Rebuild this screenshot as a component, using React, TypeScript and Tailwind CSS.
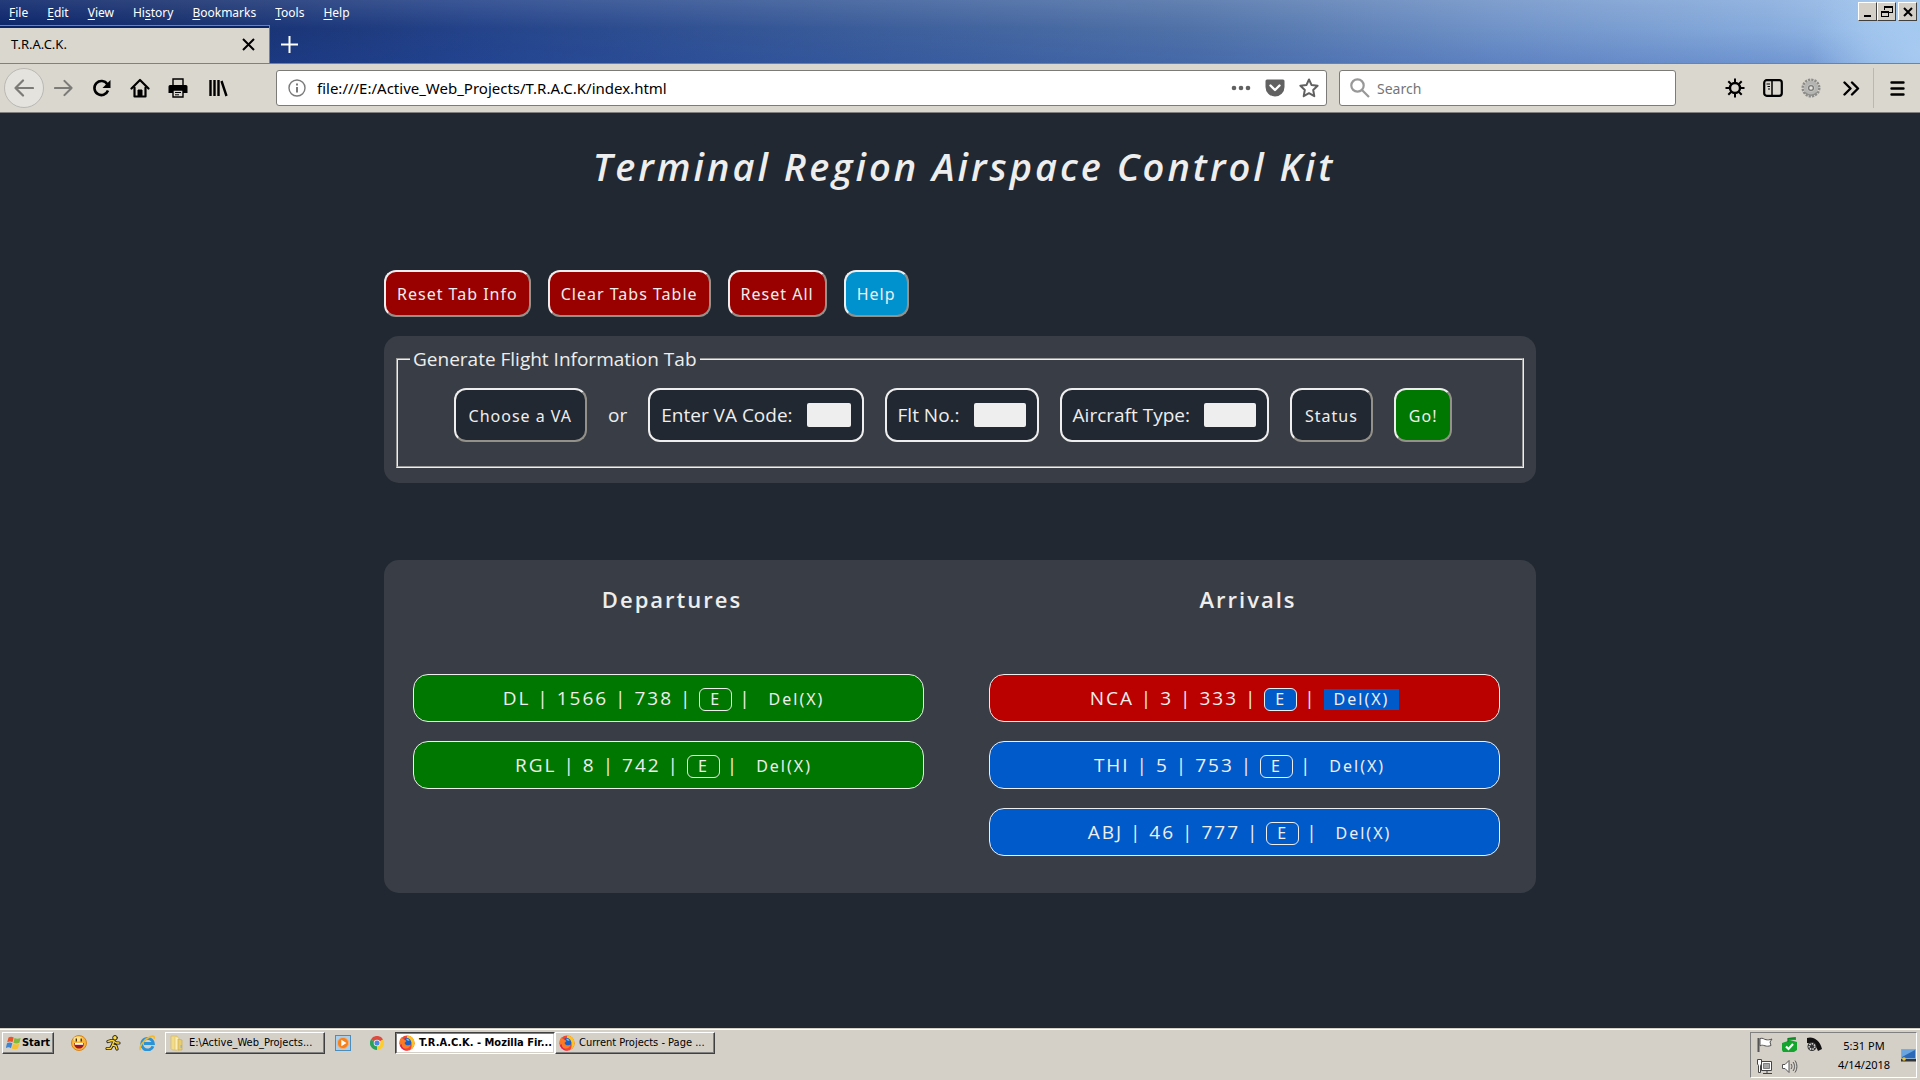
import type { ReactNode } from "react";

type Flight = { code: string; number: string; aircraft: string; tone: string; buttonTone: string };

const departures: Flight[] = [
  { code: "DL", number: "1566", aircraft: "738", tone: "bg-[#007700]", buttonTone: "bg-[#007700]" },
  { code: "RGL", number: "8", aircraft: "742", tone: "bg-[#007700]", buttonTone: "bg-[#007700]" },
];

const arrivals: Flight[] = [
  { code: "NCA", number: "3", aircraft: "333", tone: "bg-[#bb0000]", buttonTone: "bg-[#005aca]" },
  { code: "THI", number: "5", aircraft: "753", tone: "bg-[#005aca]", buttonTone: "bg-[#005aca]" },
  { code: "ABJ", number: "46", aircraft: "777", tone: "bg-[#005aca]", buttonTone: "bg-[#005aca]" },
];

const menus: [string, string, string][] = [
  ["", "F", "ile"],
  ["", "E", "dit"],
  ["", "V", "iew"],
  ["Hi", "s", "tory"],
  ["", "B", "ookmarks"],
  ["", "T", "ools"],
  ["", "H", "elp"],
];

function WindowButton({ label, children }: { label: string; children: ReactNode }) {
  return (
    <button
      aria-label={label}
      className="flex h-[19px] w-[19px] items-center justify-center border border-t-white border-r-[#404040] border-b-[#404040] border-l-white bg-[#d4d0c8]"
    >
      <svg width="14" height="14" viewBox="0 0 14 14" shapeRendering="crispEdges" fill="none" stroke="#000">
        {children}
      </svg>
    </button>
  );
}

function ToolButton({ label, className, children }: { label: string; className: string; children: ReactNode }) {
  return (
    <button aria-label={label} className={"flex h-[38px] items-center justify-center " + className}>
      {children}
    </button>
  );
}

function TitleBar() {
  return (
    <div className="bg-[radial-gradient(ellipse_110px_110px_at_100%_80%,#a6caf0_0%,#a6caf0aa_45%,#a6caf000_100%),linear-gradient(180deg,#ffffff1c_0%,#1e46a800_45%,#1e46a838_100%),linear-gradient(90deg,#0a246a_0%,#17306f_10%,#24438a_25%,#3b5d9a_45%,#5072a8_62%,#7093c8_78%,#86abdc_92%,#a0c5ee_100%)]">
      <div className="flex h-[25px] items-start justify-between">
        <nav className="flex gap-[19px] pl-[9px] font-['Noto_Sans',sans-serif] text-[12px] leading-[25px] text-white">
          {menus.map(([before, key, after]) => (
            <button key={key + after}>
              {before}
              <span className="underline underline-offset-2">{key}</span>
              {after}
            </button>
          ))}
        </nav>
        <div className="flex pt-[2px] pr-[3px]">
          <WindowButton label="Minimize">
            <path d="M3 11h7" strokeWidth="2" />
          </WindowButton>
          <WindowButton label="Restore">
            <path d="M4.500 5V1.500h8v6H9" />
            <path d="M4 2h9" strokeWidth="2" />
            <path d="M1.500 6.500h7v5h-7z" />
            <path d="M1 7h8" strokeWidth="2" />
          </WindowButton>
          <div className="ml-[2px]">
            <WindowButton label="Close">
              <path d="M3 3l8 8M11 3l-8 8" strokeWidth="2" shapeRendering="auto" />
            </WindowButton>
          </div>
        </div>
      </div>
      <div className="flex h-[38px] items-stretch">
        <div className="flex w-[270px] items-center justify-between border-t border-r border-[#808080] bg-[#dad7cf] pr-[14px] pl-[11px] shadow-[inset_0_2px_0_#0a246a]">
          <span className="font-['Noto_Sans',sans-serif] text-[13px] text-black">T.R.A.C.K.</span>
          <button aria-label="Close tab">
            <svg width="13" height="13" viewBox="0 0 13 13" stroke="#000" strokeWidth="2">
              <path d="M1 1l11 11M12 1L1 12" />
            </svg>
          </button>
        </div>
        <button aria-label="New tab" className="ml-[11px] flex items-center">
          <svg width="17" height="17" viewBox="0 0 17 17" stroke="#fff" strokeWidth="2">
            <path d="M8.500 0v17M0 8.500h17" />
          </svg>
        </button>
      </div>
    </div>
  );
}

function NavBar() {
  return (
    <div className="flex items-center border-b border-[#808080] bg-[#dad7cf] pt-[5px] pb-[4px] shadow-[inset_0_1px_0_#808080]">
      <div className="flex items-center">
        <button aria-label="Back" className="ml-1 flex h-10 w-10 items-center justify-center rounded-full border border-[#bab8b2] bg-[#e5e3de]">
          <svg width="20" height="18" viewBox="0 0 20 18" fill="none" stroke="#7c7b78" strokeWidth="2.200" strokeLinecap="round" strokeLinejoin="round">
            <path d="M19 9H1.500M9 1.500L1.500 9 9 16.500" />
          </svg>
        </button>
        <ToolButton label="Forward" className="w-[38px]">
          <svg width="19" height="18" viewBox="0 0 20 18" fill="none" stroke="#7c7b78" strokeWidth="2.200" strokeLinecap="round" strokeLinejoin="round">
            <path d="M1 9h17.500M11 1.500L18.500 9 11 16.500" />
          </svg>
        </ToolButton>
        <ToolButton label="Reload" className="w-[39px]">
          <svg width="19" height="19" viewBox="0 0 19 19" fill="none" stroke="#000" strokeWidth="2.600">
            <path d="M15.300 5.200A7 7 0 1 0 16 11.500" />
            <path d="M18.500 1v8h-8z" fill="#000" stroke="none" />
          </svg>
        </ToolButton>
        <ToolButton label="Home" className="w-[38px]">
          <svg width="20" height="20" viewBox="0 0 20 20" fill="none" stroke="#000" strokeWidth="2.200" strokeLinejoin="round" strokeLinecap="round">
            <path d="M1.500 10.500L10 2l8.500 8.500" />
            <path d="M4.500 9.500v9h11v-9" />
            <path d="M8 18v-6h4v6z" fill="#000" strokeWidth="1" />
          </svg>
        </ToolButton>
        <ToolButton label="Print" className="w-[38px]">
          <svg width="20" height="20" viewBox="0 0 20 20">
            <path d="M5 1h10v7H5z" fill="#dad7cf" stroke="#000" strokeWidth="1.400" />
            <path d="M2 7h16a1.500 1.500 0 0 1 1.500 1.500V15h-19V8.500A1.500 1.500 0 0 1 2 7z" fill="#000" />
            <path d="M5 12h10v7H5z" fill="#dad7cf" stroke="#000" strokeWidth="1.400" />
            <path d="M7 14.500h6M7 16.800h4" stroke="#000" />
          </svg>
        </ToolButton>
        <ToolButton label="Library" className="w-[42px]">
          <svg width="19" height="18" viewBox="0 0 19 18" stroke="#000" strokeWidth="2.400">
            <path d="M1.500 1v16M5.500 1v16M9.500 1v16M12.500 2l5 15" />
          </svg>
        </ToolButton>
      </div>
      <div className="ml-[37px] flex h-9 grow-[1031] basis-0 items-center rounded-[3px] border border-[#7d7b77] bg-white pr-[7px] pl-[11px]">
        <svg width="18" height="18" viewBox="0 0 18 18" fill="none" stroke="#7a7a7a">
          <circle cx="9" cy="9" r="8" strokeWidth="1.400" />
          <path d="M9 8v5.500M9 4.500v2" strokeWidth="2" />
        </svg>
        <input
          aria-label="Address"
          defaultValue="file:///E:/Active_Web_Projects/T.R.A.C.K/index.html"
          className="ml-[11px] min-w-0 flex-1 font-['Noto_Sans',sans-serif] text-[15px] text-black outline-none"
        />
        <button aria-label="Page actions">
          <svg width="20" height="6" viewBox="0 0 20 6" fill="#616161">
            <circle cx="3" cy="3" r="2.300" />
            <circle cx="10" cy="3" r="2.300" />
            <circle cx="17" cy="3" r="2.300" />
          </svg>
        </button>
        <button aria-label="Save to Pocket" className="ml-[14px]">
          <svg width="20" height="18" viewBox="0 0 20 18">
            <path d="M2 .5h16A1.500 1.500 0 0 1 19.500 2v6a9.500 9.500 0 0 1-19 0V2A1.500 1.500 0 0 1 2 .5z" fill="#616161" />
            <path d="M5.500 6.500L10 11l4.500-4.500" fill="none" stroke="#fff" strokeWidth="2.400" strokeLinecap="round" strokeLinejoin="round" />
          </svg>
        </button>
        <button aria-label="Bookmark this page" className="ml-[14px]">
          <svg width="20" height="20" viewBox="0 0 20 20" fill="none" stroke="#616161" strokeWidth="2" strokeLinejoin="round">
            <path d="M10 1.500l2.600 5.600 6 .7-4.400 4.200 1.100 6.200L10 15.200l-5.300 3 1.100-6.200L1.400 7.800l6-.7z" />
          </svg>
        </button>
      </div>
      <div className="ml-[12px] flex h-9 grow-[325] basis-0 items-center rounded-[3px] border border-[#7d7b77] bg-white pl-[10px]">
        <svg width="20" height="20" viewBox="0 0 20 20" fill="none" stroke="#989898" strokeWidth="2.200">
          <circle cx="7.500" cy="7.500" r="6.200" />
          <path d="M12 12l7 7" />
        </svg>
        <input
          aria-label="Search"
          placeholder="Search"
          className="ml-[7px] min-w-0 flex-1 font-['Noto_Sans',sans-serif] text-[14px] placeholder:text-[#757575] outline-none"
        />
      </div>
      <div className="ml-[40px] flex items-center">
        <ToolButton label="Settings" className="w-[38px]">
          <svg width="20" height="20" viewBox="0 0 20 20" fill="none" stroke="#000" strokeWidth="2.400">
            <circle cx="10" cy="10" r="5" />
            <path d="M10 .5V5M10 15v4.500M.5 10H5M15 10h4.500M3.300 3.300l3 3M13.700 13.700l3 3M16.700 3.300l-3 3M6.300 13.700l-3 3" strokeWidth="2" />
          </svg>
        </ToolButton>
        <ToolButton label="Sidebars" className="w-[38px]">
          <svg width="20" height="18" viewBox="0 0 20 18" fill="none" stroke="#000" strokeWidth="2.200">
            <rect x="1.200" y="1.200" width="17.600" height="15.600" rx="2.500" />
            <path d="M9 1v16" strokeWidth="1.500" />
            <path d="M3.500 5H7M4.500 7.500H7M5 10h2" strokeWidth="1.200" />
          </svg>
        </ToolButton>
        <ToolButton label="Extension" className="w-[38px]">
          <svg width="20" height="20" viewBox="0 0 20 20" fill="none">
            <circle cx="10" cy="10" r="8.200" stroke="#8b8b89" strokeWidth="2.600" strokeDasharray="2.200 1.020" />
            <circle cx="10" cy="10" r="5.500" fill="#c4c4c2" stroke="#b4b4b2" strokeWidth="3.400" />
            <circle cx="10" cy="10" r="2.400" fill="#e4e2dc" stroke="#777775" strokeWidth="1.300" />
            <path d="M4 14.500c3 3.500 9 3.500 12 0" stroke="#8e8e8c" strokeWidth="1.500" />
          </svg>
        </ToolButton>
        <ToolButton label="More tools" className="w-[43px]">
          <svg width="17" height="15" viewBox="0 0 17 15" fill="none" stroke="#000" strokeWidth="2.400" strokeLinecap="round" strokeLinejoin="round">
            <path d="M1.500 1.500l6 6-6 6M9 1.500l6 6-6 6" />
          </svg>
        </ToolButton>
        <span className="h-10 w-px bg-[#bab8b2]" />
        <ToolButton label="Open menu" className="w-[46px]">
          <svg width="15" height="15" viewBox="0 0 15 15" stroke="#000" strokeWidth="2.400" strokeLinecap="round">
            <path d="M1.500 1.500h12M1.500 7.500h12M1.500 13.500h12" />
          </svg>
        </ToolButton>
      </div>
    </div>
  );
}

function ActionButton({ tone, children }: { tone: string; children: ReactNode }) {
  return (
    <button
      className={
        "rounded-xl border-2 border-t-[#eee] border-r-[#94918a] border-b-[#94918a] border-l-[#eee] px-[11px] pt-[11px] pb-[9px] font-['Noto_Sans',sans-serif] text-[16px] leading-[23px] tracking-[1px] " +
        tone
      }
    >
      {children}
    </button>
  );
}

function FormButton({ tone, children }: { tone: string; children: ReactNode }) {
  return (
    <button
      className={
        "h-[54px] rounded-xl border-2 border-t-[#eee] border-r-[#94918a] border-b-[#94918a] border-l-[#eee] px-[13px] pt-[2px] font-['Noto_Sans',sans-serif] text-[16px] tracking-[1px] " +
        tone
      }
    >
      {children}
    </button>
  );
}

function Field({ id, label, width }: { id: string; label: string; width: string }) {
  return (
    <div className="flex h-[54px] items-center gap-[14px] rounded-xl border-2 border-[#eee] bg-[#222831] px-[11px]">
      <label htmlFor={id}>{label}</label>
      <input id={id} className={"h-6 rounded-[2px] bg-[#eee] px-1 text-[16px] text-black outline-none " + width} />
    </div>
  );
}

function FlightList({ title, flights }: { title: string; flights: Flight[] }) {
  return (
    <section>
      <h2 className="text-center text-[22px] leading-[31px] font-semibold tracking-[2px]">{title}</h2>
      <ul className="mt-[59px] flex flex-col gap-[19px] pr-[36px] pl-[29px]">
        {flights.map((f) => (
          <li key={f.code} className={"rounded-[15px] border border-[#eee] text-center leading-[46px] tracking-[2px] " + f.tone}>
            {f.code} | {f.number} | {f.aircraft} |{" "}
            <button
              className={"rounded-md border border-[#eee] px-[10px] font-['Noto_Sans',sans-serif] text-[16px] leading-[21px] tracking-[2px] " + f.buttonTone}
            >
              E
            </button>{" "}
            |{" "}
            <button className={"px-[10px] font-['Noto_Sans',sans-serif] text-[16px] leading-[21px] tracking-[2px] " + f.buttonTone}>
              Del(X)
            </button>
          </li>
        ))}
      </ul>
    </section>
  );
}

function FirefoxIcon() {
  return (
    <svg width="16" height="16" viewBox="0 0 16 16" className="shrink-0">
      <circle cx="8" cy="8.200" r="7.600" fill="#f4442e" />
      <path d="M8 .6c4 0 7.600 3 7.600 7.500 0 3-1.800 5.700-4.500 6.900C14 11 13 5 8 3.500z" fill="#ffc21f" />
      <circle cx="7.800" cy="7.600" r="4.500" fill="#1b5fc4" />
      <path d="M.5 8C.3 5 1.500 3 3 2c0 1.500.5 2 2 2.200L7.500 6 5.500 8c1 2.500 3.500 3 6 1.500-.5 3-3 4.500-5.500 4C3 13 .8 11 .5 8z" fill="#fb7a25" />
      <path d="M1 10c1 3.500 4.500 6 8.500 5.600C6 15.500 3 13 2.500 9z" fill="#e0187a" />
      <path d="M7 4c2-.5 3 .5 3.500 2L8.500 5.500z" fill="#7cc4f5" />
    </svg>
  );
}

function TaskButton({ active = false, icon, children }: { active?: boolean; icon: ReactNode; children: ReactNode }) {
  return (
    <button
      className={
        "flex h-[22px] w-[160px] items-center gap-1 border pl-[3px] font-['DejaVu_Sans_Condensed','DejaVu_Sans',sans-serif] text-[11px] text-black " +
        (active
          ? "border-t-[#404040] border-r-white border-b-white border-l-[#404040] bg-white font-bold shadow-[inset_1px_1px_0_#808080,inset_-1px_-1px_0_#d4d0c8]"
          : "border-t-white border-r-[#404040] border-b-[#404040] border-l-white bg-[#d4d0c8] shadow-[inset_-1px_-1px_0_#808080]")
      }
    >
      {icon}
      <span className="whitespace-nowrap">{children}</span>
    </button>
  );
}

function Taskbar() {
  return (
    <footer className="flex items-start justify-between border-t border-[#d4d0c8] bg-[#d4d0c8] pt-[3px] pb-[2px] pl-[2px] pr-[3px] shadow-[inset_0_1px_0_#fff]">
      <div className="flex items-center">
        <button className="flex h-[22px] w-[52px] items-center justify-center border border-t-white border-r-[#404040] border-b-[#404040] border-l-white font-['DejaVu_Sans_Condensed','DejaVu_Sans',sans-serif] text-[11px] font-bold text-black shadow-[inset_-1px_-1px_0_#808080]">
          <svg width="16" height="14" viewBox="0 0 16 14" className="shrink-0">
            <path d="M2.500 1.500C4.500.3 6 .5 7.700 1.500L6.500 6.300C5 5.300 3.300 5.300 1.200 6.200z" fill="#e8552b" />
            <path d="M8.500 1.900c2 1 3.700 1 6.200 0l-1.300 4.800c-2 1-4 1-6 0z" fill="#82b93c" />
            <path d="M1 7.200c2-.9 3.700-.9 5.300.1L5 12.200C3.500 11 2 11-.2 12z" fill="#3f83d3" />
            <path d="M7 7.700c2 1 4 1 6.200 0L12 12.400c-2 1-4 1-6.200.1z" fill="#f6c12d" />
          </svg>
          Start
        </button>
        <button aria-label="Messenger" className="ml-[17px]">
          <svg width="16" height="16" viewBox="0 0 16 16">
            <circle cx="8" cy="8" r="7.500" fill="#f9b43a" stroke="#d5851d" />
            <ellipse cx="7" cy="4" rx="4.500" ry="2.500" fill="#fde28b" />
            <path d="M3 8h10c0 3.500-2 5.500-5 5.500S3 11.500 3 8z" fill="#a3161b" />
            <path d="M3.800 8h8.400v1.800H3.800z" fill="#fff" />
            <path d="M5.300 3.500v3M10.200 3.500v3" stroke="#3a2000" strokeWidth="1.300" />
          </svg>
        </button>
        <button aria-label="Running man" className="ml-[18px]">
          <svg width="16" height="16" viewBox="0 0 16 16" fill="none" strokeLinecap="round" strokeLinejoin="round">
            <path d="M3 6.500l3.500-1 2.500.5-1.500 4 3.500 1 1 3M7.500 10L5.500 13.500H2M9 6.500l2.500 1.500H14" stroke="#222" strokeWidth="3.200" />
            <circle cx="10" cy="2.800" r="2.300" fill="#ffdc3c" stroke="#222" />
            <path d="M3 6.500l3.500-1 2.500.5-1.500 4 3.500 1 1 3M7.500 10L5.500 13.500H2M9 6.500l2.500 1.500H14" stroke="#ffd52e" strokeWidth="1.400" />
          </svg>
        </button>
        <button aria-label="Internet Explorer" className="ml-[18px]">
          <svg width="17" height="16" viewBox="0 0 17 16" fill="none">
            <path d="M14 11.200A5.800 5.800 0 1 1 14.300 8.500H5" stroke="#2a93d8" strokeWidth="2.900" />
            <path d="M1.500 15C-.5 12 5 4.500 11 1.800c3-1.300 5-.8 4 2" stroke="#f3b92c" strokeWidth="1.600" />
          </svg>
        </button>
        <div className="ml-[9px]">
          <TaskButton
            icon={
              <svg width="16" height="16" viewBox="0 0 16 16" className="shrink-0">
                <path d="M2 1h6v14H3.500L2 13.500z" fill="#f2dc8a" stroke="#d6b95a" strokeWidth=".7" />
                <path d="M6 1.500l4 1V15H6z" fill="#fbeeb6" stroke="#dcc26b" strokeWidth=".7" />
                <path d="M9 4l4 1v10H9z" fill="#e7cd72" stroke="#cfae4e" strokeWidth=".7" />
                <path d="M11.500 10h1.500v3h-1.500z" fill="#8cb7d8" />
              </svg>
            }
          >
            E:\Active_Web_Projects...
          </TaskButton>
        </div>
        <button aria-label="Media player" className="ml-[10px]">
          <svg width="16" height="16" viewBox="0 0 16 16">
            <rect x=".5" y=".5" width="15" height="15" fill="#a9d0ee" stroke="#4b8dbd" />
            <circle cx="8" cy="8" r="5.600" fill="#f5821f" stroke="#f9b071" />
            <path d="M6.300 4.800v6.400L11.500 8z" fill="#fff" />
          </svg>
        </button>
        <button aria-label="Chrome" className="ml-[19px]">
          <svg width="14" height="14" viewBox="0 0 14 14">
            <path d="M7 7L.9 3.500A7 7 0 0 1 13.100 3.500z" fill="#dd4b3e" />
            <path d="M7 7l6.100-3.500A7 7 0 0 1 7 14z" fill="#fbcd2f" />
            <path d="M7 7v7A7 7 0 0 1 .9 3.500z" fill="#2ba25a" />
            <circle cx="7" cy="7" r="3.300" fill="#eee" />
            <circle cx="7" cy="7" r="2.500" fill="#4a86e8" />
          </svg>
        </button>
        <div className="ml-[11px] flex">
          <TaskButton active icon={<FirefoxIcon />}>
            T.R.A.C.K. - Mozilla Fir...
          </TaskButton>
          <TaskButton icon={<FirefoxIcon />}>Current Projects - Page ...</TaskButton>
        </div>
      </div>
      <div className="flex h-[46px] items-center border border-t-[#808080] border-r-white border-b-white border-l-[#808080] pl-[5px]">
        <div className="grid grid-cols-3 gap-x-[8px] gap-y-[5px]">
          <svg width="17" height="17" viewBox="0 0 17 17" fill="#fff" stroke="#555">
            <path d="M2.500 2v14" strokeWidth="2" />
            <path d="M4 2.500c3-1 4 1 6 1.200 2 .3 3 .3 6-.7l-2 3 1 3.500c-3 1-4 .8-6 .3s-3-1-5 0z" />
          </svg>
          <svg width="17" height="17" viewBox="0 0 17 17">
            <path d="M1 7l6-2V2l8-1v3H9l7 2v8l-3 2H2L1 14z" fill="#14a52f" />
            <path d="M7 6V2.500L14 2" fill="none" stroke="#0d7d22" strokeWidth="1.200" />
            <path d="M5 10.500l2.500 2.500 4.500-5" fill="none" stroke="#fff" strokeWidth="2.200" />
          </svg>
          <svg width="17" height="17" viewBox="0 0 17 17">
            <path d="M1 2c6-2 13 2 15 11l-4 2C10 9 6 7 1 7z" fill="#111" />
            <circle cx="6" cy="10.500" r="4.500" fill="#333" />
            <circle cx="6" cy="10.500" r="2.800" fill="none" stroke="#ddd" strokeWidth="1.600" strokeDasharray="1.500 1" />
          </svg>
          <svg width="17" height="17" viewBox="0 0 17 17" fill="#ddd" stroke="#444">
            <path d="M5.500 3.500h10v9h-10z" fill="#fff" />
            <path d="M7.500 5.500h6v5h-6z" fill="#a5a5a5" strokeWidth=".6" />
            <path d="M7 15.500h9M11 13v2.500" />
            <path d="M1.500 1.500h4V6l-1 1.500v7h-2v-7l-1-1.500z" fill="#fff" />
          </svg>
          <svg width="17" height="17" viewBox="0 0 17 17" fill="#fff" stroke="#555">
            <path d="M1.500 6.500h2.500l4-4v12l-4-4H1.500z" />
            <path d="M10 6c1.200 1.500 1.200 3.500 0 5M12 4c2 2.500 2 6.500 0 9M14 2.500c2.500 3.500 2.500 8.500 0 12" fill="none" />
          </svg>
        </div>
        <div className="ml-[9px] w-[64px] text-center font-['Noto_Sans',sans-serif] text-[11px] leading-[19px] whitespace-nowrap text-black">
          <div>5:31 PM</div>
          <div>4/14/2018</div>
        </div>
        <svg width="15" height="13" viewBox="0 0 15 13" className="ml-[5px]">
          <path d="M.5.5h14v9H.5z" fill="#2b68b8" stroke="#86a9cf" />
          <path d="M1 1h13L1 8z" fill="#6aa5e0" />
          <path d="M0 10h15v2.500H0z" fill="#333" />
          <circle cx="3" cy="10" r="1.800" fill="#e6c33a" />
        </svg>
      </div>
    </footer>
  );
}

export default function App() {
  return (
    <div className="flex min-h-screen flex-col bg-[#222831]">
      <header>
        <TitleBar />
        <NavBar />
      </header>
      <main className="flex-1 font-['Open_Sans',sans-serif] text-[19px] text-[#eee]">
        <h1 className="pt-[27px] pl-2 text-center text-[38px] leading-[52px] font-semibold tracking-[3px] italic">Terminal Region Airspace Control Kit</h1>
        <div className="mx-auto mt-[78px] w-3/5">
          <div className="flex gap-[17px]">
            <ActionButton tone="bg-[#990000]">Reset Tab Info</ActionButton>
            <ActionButton tone="bg-[#990000]">Clear Tabs Table</ActionButton>
            <ActionButton tone="bg-[#990000]">Reset All</ActionButton>
            <ActionButton tone="bg-[#0092ce]">Help</ActionButton>
          </div>
          <form className="mt-[19px] rounded-[15px] bg-[#393e46] px-3 pt-[10px] pb-[15px]">
            <fieldset className="border-2 [border-style:groove] border-[#eee] px-3 pb-6">
              <legend className="px-[3px] leading-[26px]">Generate Flight Information Tab</legend>
              <div className="flex items-center justify-center gap-[21px] pt-4 pr-[14px]">
                <FormButton tone="bg-[#222831]">Choose a VA</FormButton>
                <span>or</span>
                <Field id="va-code" label="Enter VA Code:" width="w-[44px]" />
                <Field id="flight-number" label="Flt No.:" width="w-[52px]" />
                <Field id="aircraft-type" label="Aircraft Type:" width="w-[52px]" />
                <FormButton tone="bg-[#222831]">Status</FormButton>
                <FormButton tone="bg-[#007700]">Go!</FormButton>
              </div>
            </fieldset>
          </form>
          <div className="mt-[77px] grid grid-cols-2 rounded-[15px] bg-[#393e46] pt-6 pb-[37px]">
            <FlightList title="Departures" flights={departures} />
            <FlightList title="Arrivals" flights={arrivals} />
          </div>
        </div>
      </main>
      <Taskbar />
    </div>
  );
}
